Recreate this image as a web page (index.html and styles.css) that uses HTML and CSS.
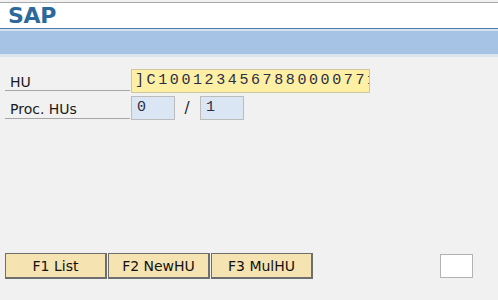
FILE: index.html
```html
<!DOCTYPE html>
<html lang="en">

<head>
    <meta charset="UTF-8">
    <meta name="viewport" content="width=device-width, initial-scale=1.0">
    <title>SAP</title>
    <link rel="stylesheet" href="styles.css">
</head>

<body>
    <div class="tela">
        <!-- Cabeçalho -->
        <div class="cabecalho">
            <span class="logo">SAP</span>
        </div>
        <div class="barra"></div>

        <!-- Campos -->
        <div class="campos">
            <div class="linha">
                <div class="rotulo">HU</div>
                <div class="entrada entrada-hu">]C1001234567880000771</div>
            </div>
            <div class="linha">
                <div class="rotulo">Proc. HUs</div>
                <div class="entrada entrada-num">0</div>
                <span class="barra-sep">/</span>
                <div class="entrada entrada-num">1</div>
            </div>
        </div>

        <!-- Botões -->
        <div class="botoes">
            <button class="botao">F1 List</button>
            <button class="botao">F2 NewHU</button>
            <button class="botao">F3 MulHU</button>
            <div class="caixa"></div>
        </div>
    </div>
</body>

</html>
```

FILE: styles.css
```css
body {
    margin: 0;
    background-color: #f1f1f1;
    font-family: Tahoma, "DejaVu Sans", Verdana, sans-serif;
    color: #1a1a1a;
}

.tela {
    width: 498px;
    height: 300px;
    padding-top: 2px;
    box-sizing: border-box;
    background: #f1f1f1;
    overflow: hidden;
}

.cabecalho {
    height: 25px;
    background: #fff;
    border-top: 1px solid #a9a9a9;
    border-bottom: 1px solid #4f7fab;
    padding-left: 8px;
}

.logo {
    font-family: "DejaVu Sans", Verdana, sans-serif;
    font-weight: bold;
    font-size: 22px;
    line-height: 25px;
    color: #2d689b;
    letter-spacing: -0.3px;
}

.barra {
    height: 23px;
    background: #a6c2e4;
    border-top: 2px solid #d6e2ef;
    border-bottom: 3px solid #dde4ec;
}

.campos {
    padding: 12px 0 0 5px;
}

.linha {
    display: flex;
    align-items: flex-start;
    height: 27px;
}

.rotulo {
    width: 125px;
    height: 22px;
    line-height: 24px;
    font-size: 14px;
    padding-left: 5px;
    padding-top: 1px;
    box-sizing: border-box;
    border-bottom: 1px solid #a6a6a6;
}

.linha:last-child .rotulo {
    height: 23px;
}

.entrada {
    height: 24px;
    box-sizing: border-box;
    border: 1px solid #bcbcbc;
    font-family: "Liberation Mono", "Courier New", monospace;
    font-size: 15px;
    line-height: 22px;
    padding-left: 5px;
    color: #2c2c44;
    overflow: hidden;
    white-space: nowrap;
    margin-left: 1px;
}

.entrada-hu {
    width: 239px;
    background: #fdf0a4;
    border-color: #cdc7a2;
    letter-spacing: 2.6px;
    padding-left: 3px;
}

.entrada-num {
    width: 44px;
    background: #dbe6f4;
}

.barra-sep {
    width: 24px;
    text-align: center;
    font-size: 15px;
    line-height: 24px;
}

.botoes {
    display: flex;
    align-items: center;
    margin-top: 130px;
    padding-left: 5px;
}

.botao {
    width: 102px;
    height: 26px;
    margin-right: 1px;
    background: #f6e3b2;
    border: 1px solid #6e6e6e;
    border-right-width: 2px;
    border-bottom-width: 2px;
    font-family: Tahoma, "DejaVu Sans", Verdana, sans-serif;
    font-size: 14px;
    color: #111;
    padding: 0;
}

.caixa {
    width: 33px;
    height: 24px;
    box-sizing: border-box;
    background: #fff;
    border: 1px solid #b3b3b3;
    margin-left: 126px;
}
```
